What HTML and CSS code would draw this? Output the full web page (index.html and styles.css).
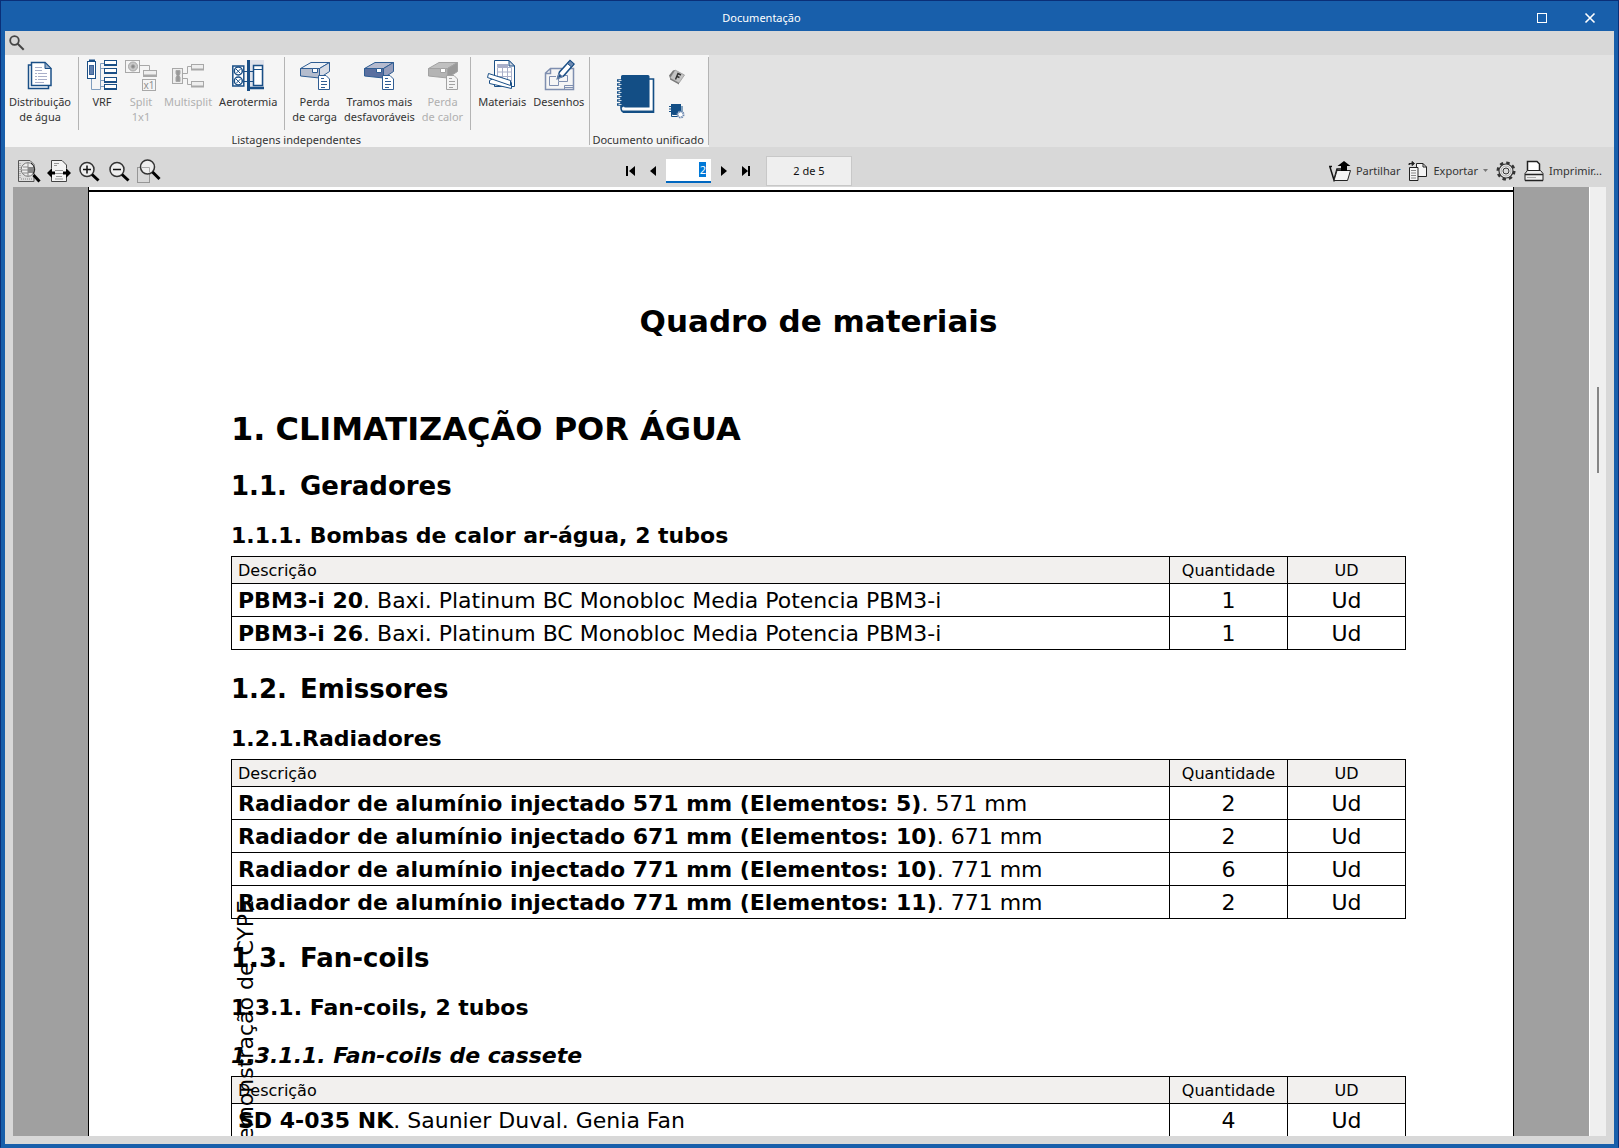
FILE: index.html
```html
<!DOCTYPE html>
<html lang="pt">

<head>
    <title>Documentação</title>
    <meta charset="utf-8">
    <meta name="viewport" content="width=device-width, initial-scale=1.0">
    <link rel="stylesheet" href="styles.css">
</head>

<body>
    <div class="window">
        <header class="titlebar">
            <span class="titlebar-text">Documentação</span>
            <div class="titlebar-buttons">
                <button aria-label="Maximizar"><svg width="12" height="12" viewBox="0 0 12 12"><rect x="1.5" y="1.5" width="9" height="9" fill="none" stroke="#fff"/></svg></button>
                <button aria-label="Fechar"><svg width="12" height="12" viewBox="0 0 12 12"><path d="M1.5 1.5l9 9M10.5 1.5l-9 9" stroke="#fff" stroke-width="1.6"/></svg></button>
            </div>
        </header>

        <div class="searchbar">
            <button aria-label="Procurar"><svg width="16" height="16" viewBox="0 0 16 16"><circle cx="5.5" cy="5.5" r="4.3" fill="none" stroke="#444" stroke-width="1.8"/><path d="M8.7 8.7l6 6" stroke="#444" stroke-width="2"/></svg></button>
        </div>

        <nav class="ribbon">
            <section class="group">
                <div class="tools">
                    <button class="tool">
                        <svg width="32" height="32" viewBox="0 0 32 32" fill="none" stroke="#1a4f86">
                            <path d="M7 6H4.500V29.500H24.500V27" fill="#fff" stroke-width="1.5"/>
                            <path d="M7.500 3.500H21L27 9.500V26.500H7.500z" fill="#fff" stroke-width="1.5"/>
                            <path d="M21 3.500V9.500H27z" fill="#9bb0c9"/>
                            <path d="M11 8.500h7M11 11.500h7M11 14.500h2M14 14.500h9M11 17.500h2M14 17.500h9M11 20.500h2M14 20.500h9M11 23.500h9" stroke="#a9afc9"/>
                        </svg>
                        <span>Distribuição<br>de água</span>
                    </button>
                    <i class="sep"></i>
                    <button class="tool">
                        <svg width="32" height="32" viewBox="0 0 32 32" fill="#fff" stroke="#1a4f86">
                            <path d="M5.500 20V30.500H14.500V4.500H18M14.500 9.500H18M14.500 21.500H18M14.500 27.500H18" fill="none" stroke="#7f9cbd"/>
                            <rect x="1.500" y="2.500" width="8" height="17"/>
                            <path d="M3 1.500h6" stroke-width="2"/>
                            <rect x="3.500" y="6.500" width="4" height="9" fill="#5f7fae" stroke="#3a6297"/>
                            <rect x="18.500" y="1.500" width="12" height="5"/><rect x="18.500" y="9.500" width="12" height="5"/><rect x="18.500" y="18.500" width="12" height="5"/><rect x="18.500" y="25.500" width="12" height="5"/>
                            <path d="M18 6h13M18 14h13M18 23h13M18 30h13" stroke-width="2"/>
                        </svg>
                        <span>VRF</span>
                    </button>
                    <button class="tool" disabled>
                        <svg width="32" height="32" viewBox="0 0 32 32" fill="none" stroke="#a8a8a8">
                            <rect x=".5" y="1.500" width="14" height="12"/>
                            <circle cx="8" cy="7.500" r="4.500" fill="#c8c8c8"/><circle cx="8" cy="7.500" r="1.800" fill="#888"/>
                            <path d="M15 6.500h9.500V11"/>
                            <rect x="18.500" y="11.500" width="13" height="6" fill="#eee"/><path d="M18 16.500h14" stroke-width="2"/>
                            <rect x="17.500" y="20.500" width="13" height="11"/>
                            <text x="18.500" y="30" class="icon-text">x1</text>
                        </svg>
                        <span>Split<br>1x1</span>
                    </button>
                    <button class="tool" disabled>
                        <svg width="32" height="32" viewBox="0 0 32 32" fill="none" stroke="#a8a8a8">
                            <rect x=".5" y="9.500" width="10" height="15" fill="#eee"/>
                            <path d="M4 11.500h4v3l-1 2 1 2v4h-4v-4l1-2-1-2z" fill="#999"/>
                            <path d="M11 14.500h4.500V7.500H19M11 19.500h4.500V25.500H19"/>
                            <rect x="19.500" y="5.500" width="12" height="5" fill="#eee"/><rect x="19.500" y="22.500" width="12" height="5" fill="#eee"/>
                            <path d="M19 10.500h13M19 27.500h13" stroke-width="2"/>
                        </svg>
                        <span>Multisplit</span>
                    </button>
                    <button class="tool">
                        <svg width="32" height="32" viewBox="0 0 32 32" fill="none" stroke="#1a4f86">
                            <path d="M16 1h16v28H16z" fill="#dfe2ea" stroke="none"/>
                            <rect x=".8" y="7" width="11" height="20" fill="#fff" stroke-width="1.500"/>
                            <circle cx="6.300" cy="12" r="4" stroke-width="1.500"/><circle cx="6.300" cy="22" r="4" stroke-width="1.500"/>
                            <path d="M4 10l4.500 4.500M8.500 10L4 14.500M4 20l4.500 4.500M8.500 20L4 24.500M12 12.500h10M12 22.500h10"/>
                            <path d="M16.500 1V32" stroke-width="3"/><path d="M16 29h16" stroke-width="2.500"/>
                            <rect x="21.500" y="6.500" width="9" height="20" fill="#fff" stroke-width="1.500"/><path d="M21 10.500h10"/>
                        </svg>
                        <span>Aerotermia</span>
                    </button>
                    <i class="sep"></i>
                    <button class="tool">
                        <svg width="32" height="32" viewBox="0 0 32 32" stroke="#2f5d93">
                            <path d="M1.500 9.500L12 3.500H30.500L20.500 9.500z" fill="#eef1f5"/><path d="M20.500 9.500L30.500 3.500V12.500L20.500 19z" fill="#d8dce5"/>
                            <path d="M1.500 9.500H20.500V19L1.500 17z" fill="#b4bccd"/><path d="M13.500 9.500h5v4h-5z" fill="#fff"/>
                            <path d="M19.500 16.500H27L30.500 20V30.500H19.500z" fill="#fff"/><path d="M22 19.500h3M22 22.500h6M22 25.500h6M22 28.500h4"/>
                        </svg>
                        <span>Perda<br>de carga</span>
                    </button>
                    <button class="tool">
                        <svg width="32" height="32" viewBox="0 0 32 32" stroke="#2f5d93">
                            <path d="M1.500 9.500L12 3.500H30.500L20.500 9.500z" fill="#b5bace"/><path d="M20.500 9.500L30.500 3.500V12.500L20.500 19z" fill="#959dbb"/>
                            <path d="M1.500 9.500H20.500V19L1.500 17z" fill="#5a6f9f"/><path d="M13.500 9.500h5v4h-5z" fill="#fff"/>
                            <path d="M19.500 16.500H27L30.500 20V30.500H19.500z" fill="#fff"/><path d="M22 19.500h3M22 22.500h6M22 25.500h6M22 28.500h4"/>
                        </svg>
                        <span>Tramos mais<br>desfavoráveis</span>
                    </button>
                    <button class="tool" disabled>
                        <svg width="32" height="32" viewBox="0 0 32 32" stroke="#a2a2a2">
                            <path d="M1.500 9.500L12 3.500H30.500L20.500 9.500z" fill="#c0c0c0"/><path d="M20.500 9.500L30.500 3.500V12.500L20.500 19z" fill="#999"/>
                            <path d="M1.500 9.500H20.500V19L1.500 17z" fill="#b4b4b4"/><path d="M13.500 9.500h5v4h-5z" fill="#fff"/>
                            <path d="M19.500 16.500H27L30.500 20V30.500H19.500z" fill="#f4f4f4"/><path d="M22 19.500h3M22 22.500h6M22 25.500h6M22 28.500h4"/>
                        </svg>
                        <span>Perda<br>de calor</span>
                    </button>
                    <i class="sep"></i>
                    <button class="tool">
                        <svg width="32" height="32" viewBox="0 0 32 32" stroke="#1a4f86" fill="#fff">
                            <path d="M8.500 1.500H23L28.500 7V27.500H8.500z"/>
                            <path d="M11 5h11v3H11z" fill="#a9afc9" stroke="none"/>
                            <path d="M11.500 8.500h14v14h-14zM16.500 8v14M21.500 8v14M11 13h15M11 17.500h15" fill="none" stroke="#a9afc9"/>
                            <path d="M23 1.500V7H28.500z" fill="#cbd3e0"/>
                            <path d="M3.500 21.500L9 18.500L25.500 23.500V29.500L3.500 24.500z"/>
                            <path d="M2.500 14.500L24.500 21.500V26.500L1.500 18.500z"/>
                        </svg>
                        <span>Materiais</span>
                    </button>
                    <button class="tool">
                        <svg width="32" height="32" viewBox="0 0 32 32" fill="none" stroke="#7f8fb0">
                            <path d="M19 9.500H7.500L2.500 14V30.500H30.500V9.500H27M7.500 9.500V14.500H2.500" stroke-width="1.500"/>
                            <path d="M13 17.500H6.500v9h9v-4h9v-6h-5M15.500 22V18M21.500 30.500v-4h9M21.500 28.500h9"/>
                            <path d="M14.500 19.500l2-6.500L27 1.500l4 3.500L20.500 17z" fill="#fff" stroke="#1a4f86" stroke-width="1.500"/>
                            <path d="M24.500 4.500L27 1.500l4 3.500-2.500 3z" fill="#6c88b0" stroke="#1a4f86"/><path d="M14.500 19.500l1.500-5 3.500 3z" fill="#1a4f86"/>
                        </svg>
                        <span>Desenhos</span>
                    </button>
                </div>
                <p class="group-name">Listagens independentes</p>
            </section>
            <section class="group">
                <div class="tools tools-unified">
                    <button aria-label="Documento unificado">
                        <svg width="38" height="38" viewBox="0 0 38 38">
                            <path d="M4 1.500Q4 0 5.500 0H31Q32.500 0 32.500 1.500V33H9q-2 0-2-1.500L4 33z" fill="#134e85"/>
                            <path d="M32 4h4.500V37.500H9Q4 37.500 4 33V5" fill="none" stroke="#134e85" stroke-width="1.600"/>
                            <path d="M7 33.500H34V5" fill="none" stroke="#fff" stroke-width="2"/>
                            <path d="M6 36.800H36.500" stroke="#134e85" stroke-width="2.500"/>
                            <path d="M0 5.500h6M0 9.500h6M0 13.500h6M0 17.500h6M0 21.500h6M0 25.500h6M0 29.500h6" stroke="#134e85" stroke-width="2.400"/>
                            <path d="M1.500 5.500h3M1.500 9.500h3M1.500 13.500h3M1.500 17.500h3M1.500 21.500h3M1.500 25.500h3M1.500 29.500h3" stroke="#fff" stroke-width=".8"/>
                        </svg>
                    </button>
                    <div class="small-tools">
                        <button aria-label="Tipo de letra">
                            <svg width="16" height="16" viewBox="0 0 16 16"><path d="M6 1L15.500 6L10 14L1 9z" fill="#c4c4c4" stroke="#999" stroke-width=".8"/><path d="M1 9L0 6.500L4 1.500L6 1zM1 9l9 5v1.500L1 10.500z" fill="#777"/><path d="M6.500 10.500L9 4.500l3 1.500M8 7.500l2.500 1" fill="none" stroke="#333" stroke-width="1.500"/></svg>
                        </button>
                        <button aria-label="Configurar documento">
                            <svg width="16" height="16" viewBox="0 0 16 16"><path d="M2 1h10v11H4l-2-1z" fill="#134e85"/><path d="M2.500 10v3.500H13V3" fill="none" stroke="#134e85"/><path d="M0 3.500h3M0 6h3M0 8.500h3" stroke="#134e85"/><circle cx="11.500" cy="11.500" r="3" fill="#fff" stroke="#6c88b0" stroke-width="2" stroke-dasharray="1.500 .8"/></svg>
                        </button>
                    </div>
                </div>
                <p class="group-name">Documento unificado</p>
            </section>
        </nav>

        <div class="toolbar">
            <div class="zoom-tools">
                <button aria-label="Página inteira">
                    <svg width="24" height="24" viewBox="0 0 24 24" fill="none" stroke="#222"><path d="M1.500 1.500H13l4 4V22.500H1.500z" fill="#ddd" stroke="#555"/><path d="M3 4v16M15 20H3" stroke="#888" stroke-dasharray="1 1"/><circle cx="11" cy="10.500" r="6.800" fill="#eee" stroke="#777"/><path d="M6 8h5M5 11h6M6 14h5M11 4v13" stroke="#888"/><path d="M11 8h6v6h-6z" fill="#888" stroke="none"/><path d="M14 4q6 5 2 11" /><path d="M16.500 16l6 6.500" stroke="#000" stroke-width="3"/></svg>
                </button>
                <button aria-label="Largura da página">
                    <svg width="24" height="24" viewBox="0 0 24 24"><path d="M4.500 9V1.500H15L19.500 6V9M4.500 18v4.500h15V18" fill="#f4f4f4" stroke="#444"/><path d="M5 9h14v9H5z" fill="#f4f4f4"/><path d="M7 4.500h5M7 6.500h3M8 11.500h8M8 14.500h8M9 17.500h6M8 20h8" stroke="#999"/><path d="M0 14l5-5v3.500h3v3H5V19zM24 14l-5-5v3.500h-3v3h3V19z" fill="#000"/></svg>
                </button>
                <button aria-label="Aumentar">
                    <svg width="24" height="24" viewBox="0 0 24 24"><circle cx="10" cy="10.500" r="7" fill="#eee" stroke="#333" stroke-width="1.500"/><path d="M6 10.500h8M10 6.500v8" stroke="#111" stroke-width="1.500"/><path d="M15 15.500l6.500 6" stroke="#000" stroke-width="3"/></svg>
                </button>
                <button aria-label="Diminuir">
                    <svg width="24" height="24" viewBox="0 0 24 24"><circle cx="10" cy="10.500" r="7" fill="#eee" stroke="#333" stroke-width="1.500"/><path d="M6 10.500h8" stroke="#111" stroke-width="1.500"/><path d="M15 15.500l6.500 6" stroke="#000" stroke-width="3"/></svg>
                </button>
                <button aria-label="Ampliar janela">
                    <svg width="24" height="24" viewBox="0 0 24 24"><path d="M.5 8.500h12v15h-12z" fill="none" stroke="#555" stroke-dasharray="1 1"/><circle cx="10.500" cy="8" r="7" fill="#eee" stroke="#333" stroke-width="1.500"/><path d="M5 8.500h7.500v5" fill="none" stroke="#aaa"/><path d="M15.500 13l7 7" stroke="#000" stroke-width="3"/></svg>
                </button>
            </div>
            <div class="pager">
                <button aria-label="Primeira página"><svg width="10" height="12" viewBox="0 0 10 12"><path d="M0 1h2v10H0zM9 1v10L3 6z"/></svg></button>
                <button aria-label="Página anterior"><svg width="10" height="12" viewBox="0 0 10 12"><path d="M8 1v10L2 6z"/></svg></button>
                <span class="page-field"><input type="text" value="2" aria-label="Página"></span>
                <button aria-label="Página seguinte"><svg width="10" height="12" viewBox="0 0 10 12"><path d="M2 1v10l6-5z"/></svg></button>
                <button aria-label="Última página"><svg width="10" height="12" viewBox="0 0 10 12"><path d="M1 1v10l6-5zM7 1h2v10H7z"/></svg></button>
                <span class="page-count">2 de 5</span>
            </div>
            <div class="actions">
                <button>
                    <svg width="22" height="22" viewBox="0 0 22 22"><path d="M3 6.500H.8L5 20l3-11h4" fill="none" stroke="#111" stroke-width="1.500"/><path d="M5 20.500L8 10.500H21.500L18.500 20.500z" fill="#f4f4f4" stroke="#222"/><path d="M15 1l6.500 5H18v5h-6V6H8.500z" fill="#000"/></svg>
                    Partilhar
                </button>
                <button>
                    <svg width="20" height="20" viewBox="0 0 20 20"><path d="M8.500 2.500H15L18.500 6V15.500H8.500z" fill="#f4f4f4" stroke="#222"/><path d="M15 2.500V6h3.500" fill="none" stroke="#222"/><path d="M1.500 6.500H10V19.500H1.500z" fill="#f4f4f4" stroke="#222"/><path d="M3 9.500h5M3 12h5M3 14.500h5M3 17h5" stroke="#888"/><path d="M1 4V2.500h3M4 .5L6.500 2.500 4 4.500z" fill="#222" stroke="#222"/></svg>
                    Exportar
                    <svg width="5" height="3" viewBox="0 0 5 3"><path d="M0 0h5L2.500 3z" fill="#777"/></svg>
                </button>
                <button aria-label="Opções">
                    <svg width="20" height="20" viewBox="0 0 20 20" fill="none" stroke="#333"><circle cx="10" cy="10" r="8.200" stroke-width="2.600" stroke-dasharray="3.400 3.040"/><circle cx="10" cy="10" r="7" fill="#eee" stroke-width="1.200"/><circle cx="10" cy="10" r="3" fill="#d8d8d8"/><circle cx="10" cy="10" r="5" stroke="#aaa"/></svg>
                </button>
                <button>
                    <svg width="20" height="22" viewBox="0 0 20 22" stroke="#222"><path d="M3.500 12V1.500H13L15.500 4V12" fill="#fff" stroke-width="1.500"/><path d="M1 13.500L3.500 10.500H16.500L19 13.500V20.500H1z" fill="#eee"/><path d="M1 14.500h18M1 20.500h18" stroke-width="1.500"/><path d="M3 17.500h9" stroke="#aaa"/></svg>
                    Imprimir...
                </button>
            </div>
        </div>

        <main class="viewer">
            <div class="canvas">
                <article class="page">
                    <div class="sheet">
                        <p class="title">Quadro de materiais</p>
                        <h1><span class="num">1.</span>CLIMATIZAÇÃO POR ÁGUA</h1>

                        <h2><span class="num">1.1.</span>Geradores</h2>
                        <h3>1.1.1. Bombas de calor ar-água, 2 tubos</h3>
                        <table>
                            <thead>
                                <tr><th>Descrição</th><th>Quantidade</th><th>UD</th></tr>
                            </thead>
                            <tbody>
                                <tr><td><b>PBM3-i 20</b>. Baxi. Platinum BC Monobloc Media Potencia PBM3-i</td><td>1</td><td>Ud</td></tr>
                                <tr><td><b>PBM3-i 26</b>. Baxi. Platinum BC Monobloc Media Potencia PBM3-i</td><td>1</td><td>Ud</td></tr>
                            </tbody>
                        </table>

                        <h2><span class="num">1.2.</span>Emissores</h2>
                        <h3>1.2.1.Radiadores</h3>
                        <table>
                            <thead>
                                <tr><th>Descrição</th><th>Quantidade</th><th>UD</th></tr>
                            </thead>
                            <tbody>
                                <tr><td><b>Radiador de alumínio injectado 571 mm (Elementos: 5)</b>. 571 mm</td><td>2</td><td>Ud</td></tr>
                                <tr><td><b>Radiador de alumínio injectado 671 mm (Elementos: 10)</b>. 671 mm</td><td>2</td><td>Ud</td></tr>
                                <tr><td><b>Radiador de alumínio injectado 771 mm (Elementos: 10)</b>. 771 mm</td><td>6</td><td>Ud</td></tr>
                                <tr><td><b>Radiador de alumínio injectado 771 mm (Elementos: 11)</b>. 771 mm</td><td>2</td><td>Ud</td></tr>
                            </tbody>
                        </table>

                        <h2><span class="num">1.3.</span>Fan-coils</h2>
                        <h3>1.3.1. Fan-coils, 2 tubos</h3>
                        <h4>1.3.1.1. Fan-coils de cassete</h4>
                        <table>
                            <thead>
                                <tr><th>Descrição</th><th>Quantidade</th><th>UD</th></tr>
                            </thead>
                            <tbody>
                                <tr><td><b>SD 4-035 NK</b>. Saunier Duval. Genia Fan</td><td>4</td><td>Ud</td></tr>
                            </tbody>
                        </table>
                        <p class="watermark">demonstração de CYPE</p>
                    </div>
                </article>
            </div>
            <div class="scrollbar"><div class="thumb"></div></div>
        </main>
    </div>
</body>

</html>
```
FILE: styles.css
```css
* {
    box-sizing: border-box;
}

body {
    margin: 0;
    font-family: "Noto Sans", "Open Sans", sans-serif;
    font-size: 11px;
    color: #333;
}

p, h1, h2, h3, h4 {
    margin: 0;
}

button {
    display: flex;
    align-items: center;
    border: none;
    padding: 0;
    background: none;
    font: inherit;
    color: inherit;
}

svg {
    display: block;
    flex: none;
}

.window {
    display: flex;
    flex-direction: column;
    height: 100vh;
    padding: 0 4px 3px;
    border: 1px solid #0a2f78;
    border-bottom-color: #185fab;
    background-color: #185fab;
}

/* barra de título */

.titlebar {
    position: relative;
    display: flex;
    align-items: center;
    justify-content: center;
    height: 30px;
    padding-top: 3px;
    margin-right: 96px;
    color: #fff;
    flex: none;
}

.titlebar-buttons {
    position: absolute;
    right: -78px;
    display: flex;
    gap: 36px;
}

.searchbar {
    display: flex;
    height: 24px;
    padding: 0 4px;
    background-color: #d8d8d8;
    flex: none;
}

/* friso */

.ribbon {
    display: flex;
    height: 92px;
    background-color: #e2e2e2;
    flex: none;
}

.group {
    display: flex;
    flex-direction: column;
    justify-content: space-between;
    background: linear-gradient(#b4b4b4, #b4b4b4) right 2px / 1px 88px no-repeat #f5f5f5;
    padding: 2px 1px 0 0;
}

.tools {
    display: flex;
    gap: 7px;
    padding: 0 5px 0 4px;
    height: 73px;
}

.tool {
    flex-direction: column;
    align-items: center;
    gap: 3px;
    padding-top: 2px;
    line-height: 15px;
    text-align: center;
}

.tool:disabled {
    color: #b0b0b0;
}

.icon-text {
    font-size: 10px;
    fill: #909090;
    stroke: none;
}

.sep {
    width: 1px;
    background-color: #b4b4b4;
}

.group-name {
    height: 15px;
    padding: 0 4px 0 2px;
    line-height: 16px;
    text-align: center;
}

.tools-unified {
    justify-content: center;
    gap: 14px;
    padding: 1px 0 0 3px;
}

.small-tools {
    display: flex;
    flex-direction: column;
    justify-content: center;
    gap: 18px;
}

/* barra de ferramentas */

.toolbar {
    display: flex;
    align-items: center;
    justify-content: space-between;
    height: 40px;
    padding: 7px 12px 0;
    background-color: #d8d8d8;
    flex: none;
}

.zoom-tools {
    display: flex;
    gap: 6px;
}

.pager {
    display: flex;
    align-items: center;
    gap: 12px;
    padding-right: 12px;
}

.page-field {
    margin: 0 -4px;
}

.page-field input {
    display: block;
    width: 45px;
    height: 24px;
    padding: 0 5px;
    border: none;
    border-bottom: 2px solid #0067c0;
    background: #fff linear-gradient(#0078d7, #0078d7) right 5px center / 7px 15px no-repeat;
    color: #fff;
    font: inherit;
    text-align: right;
}

.page-count {
    width: 86px;
    height: 30px;
    margin-left: 3px;
    border: 1px solid #c8c8c8;
    background-color: #efefef;
    color: #111;
    line-height: 28px;
    text-align: center;
}

.actions {
    display: flex;
    gap: 8px;
}

.actions button {
    gap: 5px;
}

/* documento */

.viewer {
    display: flex;
    flex: 1;
    min-height: 0;
    padding: 0 8px 8px;
    background-color: #d8d8d8;
}

.canvas {
    flex: 1;
    padding: 0 75px;
    overflow: hidden;
    background-color: #a0a0a0;
}

.page {
    padding-top: 3px;
    border: 1px solid #000;
    border-width: 0 1px;
    background-color: #fff;
}

.sheet {
    position: relative;
    padding: 109px 107px 40px 142px;
    border-top: 2px solid #000;
    font-family: "DejaVu Sans", Verdana, sans-serif;
    font-size: 22px;
    color: #000;
}

.title {
    margin-bottom: 68px;
    font-size: 31px;
    font-weight: bold;
    line-height: 40px;
    text-align: center;
}

h1 {
    font-size: 32px;
    line-height: 40px;
    margin-bottom: 21px;
}

h2 {
    font-size: 26px;
    line-height: 32px;
    margin-bottom: 20px;
}

h3, h4 {
    font-size: 22px;
    line-height: 28px;
    margin-bottom: 6px;
}

h4 {
    margin-top: 20px;
    font-style: italic;
}

.num {
    margin-right: 13px;
}

h1 .num {
    margin-right: 10px;
}

table {
    width: 100%;
    margin-bottom: 23px;
    border-collapse: collapse;
    table-layout: fixed;
}

th, td {
    padding: 2px 6px 0;
    border: 1px solid #000;
    line-height: 30px;
    text-align: center;
    white-space: nowrap;
}

th {
    width: 118px;
    background-color: #f2f0ee;
    font-size: 16px;
    font-weight: normal;
    line-height: 24px;
}

th:first-child, td:first-child {
    width: auto;
    text-align: left;
}

.watermark {
    position: absolute;
    top: 708px;
    left: 144px;
    line-height: 26px;
    white-space: nowrap;
    writing-mode: vertical-rl;
    transform: rotate(180deg);
}

.scrollbar {
    width: 17px;
    padding: 200px 7px 0;
    border-left: 1px solid #fff;
    background-color: #efefef;
}

.thumb {
    width: 2px;
    height: 86px;
    background-color: #858585;
}
```
